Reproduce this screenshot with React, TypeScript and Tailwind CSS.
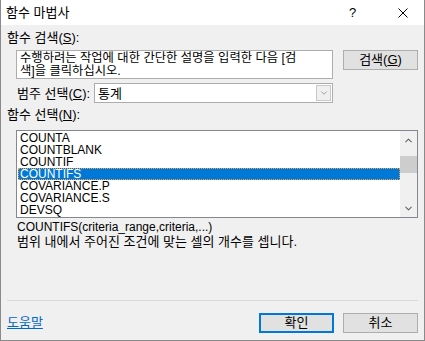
import { ChevronDown, ChevronUp } from 'lucide-react'

const FONT = { fontFamily: "'Liberation Sans', 'Noto Sans CJK KR', sans-serif" }

const FUNCS = ['COUNTA', 'COUNTBLANK', 'COUNTIF', 'COUNTIFS', 'COVARIANCE.P', 'COVARIANCE.S', 'DEVSQ']

function Btn({ children, primary }: { children: React.ReactNode; primary?: boolean }) {
  return (
    <div
      className={
        'flex h-[20px] w-[75px] items-center justify-center bg-[#e1e1e1] text-[13px] leading-[14px] text-black ' +
        (primary ? 'border-2 border-[#0078d7]' : 'border border-[#adadad]')
      }
    >
      {children}
    </div>
  )
}

export default function App() {
  const selected = 'COUNTIFS'

  return (
    <div
      style={FONT}
      className="flex h-[341px] w-[425px] flex-col border-x border-b border-[#8a8a8a] bg-[#f0f0f0] text-[13px] text-black"
    >
      {/* Title bar */}
      <div className="flex h-[25px] shrink-0 items-center bg-white pl-[5px]">
        <span className="leading-[14px]">함수 마법사</span>
        <span className="ml-auto w-[12px] text-[13px] leading-[14px]">?</span>
        <svg width="10" height="10" viewBox="0 0 10 10" className="ml-[37px] mr-[16px]">
          <path d="M0.5 0.5 L9.5 9.5 M9.5 0.5 L0.5 9.5" stroke="#000" strokeWidth="1" />
        </svg>
      </div>

      {/* Search */}
      <div className="mt-[5px] h-[15px] pl-[6px] leading-[15px]">
        함수 검색(<span className="underline">S</span>):
      </div>
      <div className="mt-[5px] flex">
        <div className="ml-[15px] h-[29px] w-[317px] border border-[#adadad] bg-white pl-[3px] pt-[1px] text-[12.3px] leading-[13px] whitespace-nowrap">
          수행하려는 작업에 대한 간단한 설명을 입력한 다음 [검
          <br />
          색]을 클릭하십시오.
        </div>
        <div className="ml-[10px]">
          <Btn>
            검색(<span className="underline">G</span>)
          </Btn>
        </div>
      </div>

      {/* Category */}
      <div className="mt-[4px] flex h-[20px] items-center">
        <span className="ml-[16px] w-[77px] leading-[15px]">
          범주 선택(<span className="underline">C</span>):
        </span>
        <div className="flex h-[20px] w-[239px] items-center border border-[#adadad] bg-white">
          <span className="pl-[3px] leading-[15px]">통계</span>
          <div className="ml-auto mr-[1px] flex h-[16px] w-[15px] items-center justify-center border border-[#c8c8c8] bg-[#f0f0f0]">
            <ChevronDown size={10} strokeWidth={1.5} color="#707070" />
          </div>
        </div>
      </div>

      {/* Function list */}
      <div className="mt-[4px] h-[15px] pl-[6px] leading-[15px]">
        함수 선택(<span className="underline">N</span>):
      </div>
      <div className="ml-[15px] mt-[8px] flex h-[88px] w-[402px] border border-[#828790] bg-white text-[12px]">
        <div className="flex-1 py-[1px]">
          {FUNCS.map(f =>
            f === selected ? (
              <div
                key={f}
                className="ml-[1px] h-[12px] border border-dotted border-[#f7a23b] bg-[#0078d7] pl-[1px] leading-[10px] text-white"
              >
                {f}
              </div>
            ) : (
              <div key={f} className="h-[12px] pl-[3px] leading-[12px]">
                {f}
              </div>
            ),
          )}
        </div>
        <div className="flex w-[17px] flex-col items-center bg-[#f0f0f0]">
          <div className="flex h-[17px] items-center justify-center pt-[2px]">
            <ChevronUp size={11} strokeWidth={2.2} color="#606060" />
          </div>
          <div className="mt-[8px] h-[17px] w-[17px] bg-[#cdcdcd]" />
          <div className="mt-auto flex h-[17px] items-center justify-center pb-[1px]">
            <ChevronDown size={11} strokeWidth={2.2} color="#606060" />
          </div>
        </div>
      </div>

      {/* Description */}
      <div className="mt-[2px] pl-[16px] text-[12px] leading-[14px]">COUNTIFS(criteria_range,criteria,...)</div>
      <div className="pl-[16px] leading-[15px]">범위 내에서 주어진 조건에 맞는 셀의 개수를 셉니다.</div>

      {/* Footer */}
      <div className="mt-auto ml-[6px] mr-[6px] h-[1px] bg-[#dadada]" />
      <div className="mb-[7px] mt-[12px] flex h-[20px] items-center">
        <span className="ml-[6px] text-[#0066cc] underline leading-[14px]">도움말</span>
        <div className="ml-auto flex gap-[9px] pr-[6px]">
          <Btn primary>확인</Btn>
          <Btn>취소</Btn>
        </div>
      </div>
    </div>
  )
}
